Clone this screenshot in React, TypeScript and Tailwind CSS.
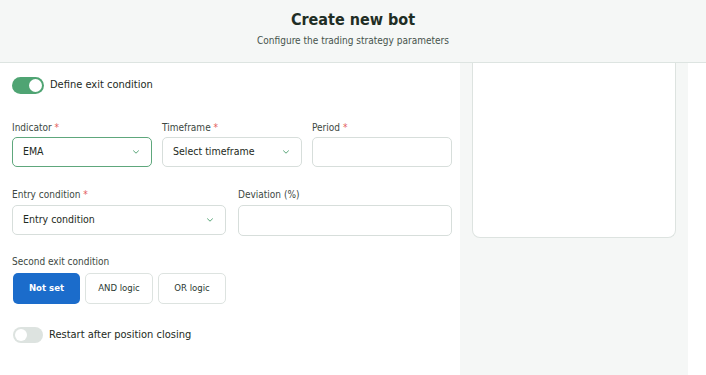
import React from "react";

const Chevron = () => (
  <svg width="10" height="10" viewBox="0 0 10 10" fill="none" className="shrink-0">
    <path d="M2.5 3.8 L5 6.2 L7.5 3.8" stroke="#5aa67a" strokeWidth="1" strokeLinecap="round" strokeLinejoin="round" />
  </svg>
);

const Req = () => <span className="text-[#e35d5d]"> *</span>;

export default function App() {
  return (
    <div className="w-[706px] h-[375px] overflow-hidden bg-white flex flex-col text-[#1d2a22]" style={{ fontFamily: '"DejaVu Sans Condensed", "DejaVu Sans", sans-serif' }}>
      <div className="h-[63px] shrink-0 bg-[#f5f7f6] border-b border-[#dde4e1] flex flex-col items-center pt-[9px]">
        <div className="text-[16px] font-bold leading-[22px] text-[#1f2e25]">Create new bot</div>
        <div className="text-[10px] leading-[14px] mt-[3px] text-[#46534c]">Configure the trading strategy parameters</div>
      </div>
      <div className="flex flex-1 min-h-0">
        <div className="w-[460px] shrink-0 pl-[12px] pr-[8px] pt-[13px]">
          <div className="flex items-center gap-[6px] h-[18px]">
            <div className="w-[32px] h-[17px] rounded-full bg-[#4fa473] relative">
              <div className="absolute right-[2px] top-[2px] w-[13px] h-[13px] rounded-full bg-white" />
            </div>
            <span className="text-[11px]">Define exit condition</span>
          </div>

          <div className="flex gap-[10px] mt-[27px]">
            <div className="w-[140px]">
              <div className="text-[10px] leading-[13px] text-[#3c4842] mb-[3px]">Indicator<Req /></div>
              <div className="h-[30px] rounded-[5px] border border-[#5ea77c] flex items-center justify-between pl-[10px] pr-[10px] text-[10.5px]">
                <span>EMA</span>
                <Chevron />
              </div>
            </div>
            <div className="w-[140px]">
              <div className="text-[10px] leading-[13px] text-[#3c4842] mb-[3px]">Timeframe<Req /></div>
              <div className="h-[30px] rounded-[5px] border border-[#d7dedb] flex items-center justify-between pl-[10px] pr-[10px] text-[10.5px]">
                <span>Select timeframe</span>
                <Chevron />
              </div>
            </div>
            <div className="w-[140px]">
              <div className="text-[10px] leading-[13px] text-[#3c4842] mb-[3px]">Period<Req /></div>
              <div className="h-[30px] rounded-[5px] border border-[#d7dedb]" />
            </div>
          </div>

          <div className="flex gap-[12px] mt-[21px]">
            <div className="w-[214px]">
              <div className="text-[10px] leading-[13px] text-[#3c4842] mb-[4px]">Entry condition<Req /></div>
              <div className="h-[30px] rounded-[5px] border border-[#d7dedb] flex items-center justify-between pl-[10px] pr-[10px] text-[10.5px]">
                <span>Entry condition</span>
                <Chevron />
              </div>
            </div>
            <div className="w-[214px]">
              <div className="text-[10px] leading-[13px] text-[#3c4842] mb-[4px]">Deviation (%)</div>
              <div className="h-[31px] rounded-[5px] border border-[#d7dedb]" />
            </div>
          </div>

          <div className="mt-[19px] text-[10px] leading-[13px] text-[#3c4842]">Second exit condition</div>
          <div className="flex gap-[5px] mt-[5px] pl-[1px]">
            <div className="w-[67px] h-[31px] rounded-[5px] bg-[#1b6ccb] text-white text-[9.5px] font-bold flex items-center justify-center">Not set</div>
            <div className="w-[68px] h-[31px] rounded-[5px] border border-[#dde3e0] text-[9.5px] text-[#2c3a33] flex items-center justify-center">AND logic</div>
            <div className="w-[68px] h-[31px] rounded-[5px] border border-[#dde3e0] text-[9.5px] text-[#2c3a33] flex items-center justify-center">OR logic</div>
          </div>

          <div className="flex items-center gap-[6px] mt-[23px] pl-[1px]">
            <div className="w-[30px] h-[16px] rounded-full bg-[#dde3e0] relative">
              <div className="absolute left-[2px] top-[2px] w-[12px] h-[12px] rounded-full bg-white" />
            </div>
            <span className="text-[11px]">Restart after position closing</span>
          </div>
        </div>
        <div className="w-[228px] shrink-0 bg-[#f5f7f6] px-[12px]">
          <div className="h-[175px] bg-white border border-t-0 border-[#dde3e0] rounded-b-[8px]" />
        </div>
        <div className="flex-1 bg-white" />
      </div>
    </div>
  );
}
